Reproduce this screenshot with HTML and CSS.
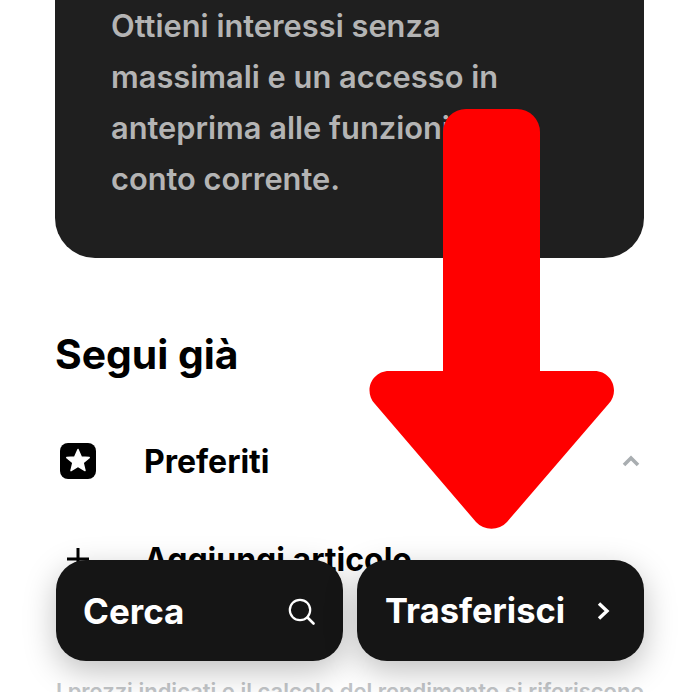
FILE: index.html
```html
<!DOCTYPE html>
<html lang="it">
<head>
<meta charset="utf-8">
<title>Segui già</title>
<link rel="stylesheet" href="styles.css">
</head>
<body>
<main class="page">
  <section class="card">
    <p class="card-text">Ottieni interessi senza massimali e un accesso in anteprima alle funzioni del conto corrente.</p>
  </section>
  <h2 class="heading">Segui già</h2>
  <div class="row row-first">
    <span class="row-icon">
      <svg class="star-icon" viewBox="0 0 36 36" width="36" height="36"><path fill-rule="evenodd" fill="#000" d="M8 0h20a8 8 0 0 1 8 8v20a8 8 0 0 1-8 8H8a8 8 0 0 1-8-8V8a8 8 0 0 1 8-8Z"/><path fill="#fff" stroke="#fff" stroke-width="1.5" stroke-linejoin="round" d="M18 6.500l3.200 7.400 8 .7-6.100 5.200 1.900 7.800L18 23.400l-7 4.200 1.900-7.800-6.100-5.200 8-.7Z"/></svg>
    </span>
    <span class="row-label">Preferiti</span>
    <svg class="chevron-up" viewBox="0 0 18 12" width="18" height="12"><path d="M2 10l7-7 7 7" fill="none" stroke="#a9aeb1" stroke-width="3.600"/></svg>
  </div>
  <div class="row row-second">
    <span class="row-icon">
      <svg viewBox="0 0 36 36" width="36" height="36"><path d="M18 7v22M7 18h22" stroke="#000" stroke-width="3" fill="none"/></svg>
    </span>
    <span class="row-label">Aggiungi articolo</span>
  </div>
  <p class="footnote">I prezzi indicati e il calcolo del rendimento si riferiscono</p>
</main>
<nav class="actions">
  <button class="action" type="button">
    <span>Cerca</span>
    <svg viewBox="0 0 28 28" width="28" height="28"><circle cx="13" cy="13" r="10.200" fill="none" stroke="#fff" stroke-width="2.200"/><path d="M20.500 20.500l6 6" stroke="#fff" stroke-width="2.600" stroke-linecap="round"/></svg>
  </button>
  <button class="action action-transfer" type="button">
    <span>Trasferisci</span>
    <svg viewBox="0 0 14 20" width="14" height="20"><path d="M3 2.500l8 7.500-8 7.500" fill="none" stroke="#fff" stroke-width="3.400"/></svg>
  </button>
</nav>
<svg class="arrow" viewBox="0 0 700 692" width="700" height="692"><path fill="#ff0000" d="M443 132a23 23 0 0 1 23-23h51a23 23 0 0 1 23 23V371h54.500c17 0 26 20 14 33L507 522a21 21 0 0 1-31 0L375 404c-12-13-3-33 14-33h54Z"/></svg>
</body>
</html>
```
FILE: styles.css
```css
* { box-sizing: border-box; }
html, body { margin: 0; padding: 0; height: 692px; overflow: hidden; background: #fff; }
body { position: relative; width: 700px; font-family: Inter, "Liberation Sans", sans-serif; color: #000; }
.page { padding: 0 56px; }
.card {
  width: 589px;
  margin-left: -1px;
  height: 258px;
  padding: 0 100px 0 56px;
  background: #1f1f1f;
  border-radius: 0 0 40px 40px;
}
.card-text {
  margin: 0;
  font-size: 30.800px;
  line-height: 51px;
  font-weight: 600;
  color: #b4b4b4;
}
.heading {
  margin: 73px 0 0 -1px;
  font-size: 40.800px;
  line-height: 46px;
  font-weight: 700;
}
.row { display: flex; align-items: center; }
.row-first { margin-top: 62px; height: 44px; }
.row-second { margin-top: 54px; height: 44px; }
.row-icon { width: 88px; padding-left: 4px; display: flex; flex: none; }
.row-label { flex: 1; padding-top: 2px; font-size: 32px; line-height: 44px; font-weight: 700; }
.chevron-up { margin-right: 4px; }
.footnote {
  margin: 95px 0 0;
  font-size: 22px;
  line-height: 30px;
  font-weight: 600;
  color: #c2c5c8;
  white-space: nowrap;
}
.actions {
  position: absolute;
  left: 56px;
  top: 560px;
  display: flex;
  gap: 14px;
}
.action {
  width: 287px;
  height: 101px;
  padding: 0 28px 0 27px;
  display: flex;
  align-items: center;
  justify-content: space-between;
  background: #151515;
  color: #fff;
  border: 0;
  border-radius: 30px;
  box-shadow: 0 10px 32px rgba(0, 0, 0, .25);
  font-family: inherit;
  font-size: 35px;
  font-weight: 700;
}
.action-transfer { padding-left: 28px; font-size: 34.500px; }
.action-transfer svg { margin-right: 6px; }
.arrow { position: absolute; left: 0; top: 0; }
```
